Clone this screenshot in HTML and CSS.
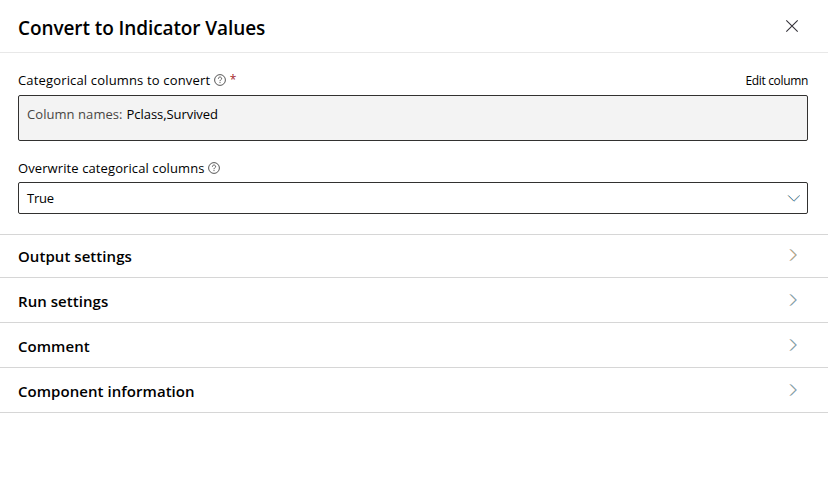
FILE: index.html
```html
<!DOCTYPE html>
<html lang="en">
<head>
<meta charset="utf-8">
<title>Convert to Indicator Values</title>
<link rel="stylesheet" href="styles.css">
</head>
<body>
<header class="panel-header">
  <h1 class="title">Convert to Indicator Values</h1>
  <svg class="close" viewBox="0 0 12 12"><path d="M.3.3l11.4 11.4M11.7.3L.3 11.7"/></svg>
</header>
<main class="form">
  <div class="label-row">
    <span class="label label-columns">Categorical columns to convert</span>
    <svg class="help" viewBox="0 0 12 12"><circle cx="6" cy="6" r="5.4"/><path d="M4.4 4.7C4.4 2.5 7.6 2.5 7.6 4.6C7.6 5.8 6 5.8 6 7.2M6 8.1v1"/></svg>
    <span class="required">*</span>
    <span class="edit">Edit column</span>
  </div>
  <div class="columns-box"><span class="columns-key">Column names:</span><span class="columns-value">Pclass,Survived</span></div>
  <div class="label-row label-row-second">
    <span class="label label-overwrite">Overwrite categorical columns</span>
    <svg class="help" viewBox="0 0 12 12"><circle cx="6" cy="6" r="5.4"/><path d="M4.4 4.7C4.4 2.5 7.6 2.5 7.6 4.6C7.6 5.8 6 5.8 6 7.2M6 8.1v1"/></svg>
  </div>
  <div class="select"><span class="select-value">True</span><svg class="chevron-down" viewBox="0 0 12 7"><path class="warm" d="M0 .5L5.6 6.1L11.2.5"/><path class="cool" d="M.6.5L6.2 6.1L11.8.5"/></svg></div>
</main>
<section class="sections">
  <div class="section section-first"><span class="name">Output settings</span><svg class="chevron" viewBox="0 0 7 12"><path class="cool" d="M.8.4L6.4 6L.8 11.6"/><path class="warm" d="M0 .4L5.6 6L0 11.6"/></svg></div>
  <div class="section"><span class="name">Run settings</span><svg class="chevron" viewBox="0 0 7 12"><path class="warm" d="M0 .4L5.6 6L0 11.6"/><path class="cool" d="M.8.4L6.4 6L.8 11.6"/></svg></div>
  <div class="section"><span class="name">Comment</span><svg class="chevron" viewBox="0 0 7 12"><path class="warm" d="M0 .4L5.6 6L0 11.6"/><path class="cool" d="M.8.4L6.4 6L.8 11.6"/></svg></div>
  <div class="section"><span class="name">Component information</span><svg class="chevron" viewBox="0 0 7 12"><path class="warm" d="M0 .4L5.6 6L0 11.6"/><path class="cool" d="M.8.4L6.4 6L.8 11.6"/></svg></div>
</section>
</body>
</html>
```
FILE: styles.css
```css
* { box-sizing: border-box; }
body {
  margin: 0;
  background: #fff;
  color: #000;
  font: 13px/20px "Open Sans", "Noto Sans", sans-serif;
  white-space: nowrap;
}
svg { display: block; flex: none; fill: none; overflow: visible; }
.panel-header {
  display: flex;
  align-items: center;
  justify-content: space-between;
  height: 53px;
  padding: 3px 30px 0 18px;
  border-bottom: 1px solid #e8e8e8;
}
.title { margin: 0; font-size: 19px; font-weight: 560; line-height: 26px; letter-spacing: -.09px; }
.close { width: 12px; height: 12px; margin-top: -3px; stroke: #35333a; stroke-width: 1.1; }
.form { height: 181px; padding: 17px 20px 0 18px; }
.label-row { display: flex; align-items: center; height: 20px; }
.label-row-second { margin-top: 17px; }
.label-columns { letter-spacing: .16px; }
.label-overwrite { letter-spacing: .1px; }
.help { width: 12px; height: 12px; margin-left: 3.5px; stroke: #444; stroke-width: .9; }
.required { margin-left: 4px; color: #a4262c; font-size: 12px; }
.edit { margin: 2px 0 0 auto; font-size: 12px; letter-spacing: -.34px; }
.columns-box {
  display: flex;
  gap: 4px;
  height: 46px;
  margin-top: 5px;
  padding: 8px;
  border: 1px solid #323130;
  border-radius: 2px;
  background: #f3f3f3;
}
.columns-key { color: #484644; letter-spacing: .06px; }
.columns-value { letter-spacing: -.06px; }
.select {
  display: flex;
  align-items: center;
  justify-content: space-between;
  height: 32px;
  margin-top: 4px;
  padding: 0 7px 0 8px;
  border: 1px solid #323130;
  border-radius: 2px;
}
.select-value { letter-spacing: -.2px; }
.chevron-down { width: 12px; height: 7px; }
.warm { stroke: #e39a4c; }
.cool { stroke: #4596d4; }
.section {
  display: flex;
  align-items: center;
  justify-content: space-between;
  height: 45px;
  padding: 2px 31.5px 0 18px;
  border-bottom: 1px solid #d6d6d6;
}
.section-first { height: 44px; padding-top: 0; border-top: 1px solid #d6d6d6; }
.name { font-size: 15px; font-weight: 560; letter-spacing: .05px; }
.chevron { width: 7px; height: 12px; margin-top: -3px; }
```
